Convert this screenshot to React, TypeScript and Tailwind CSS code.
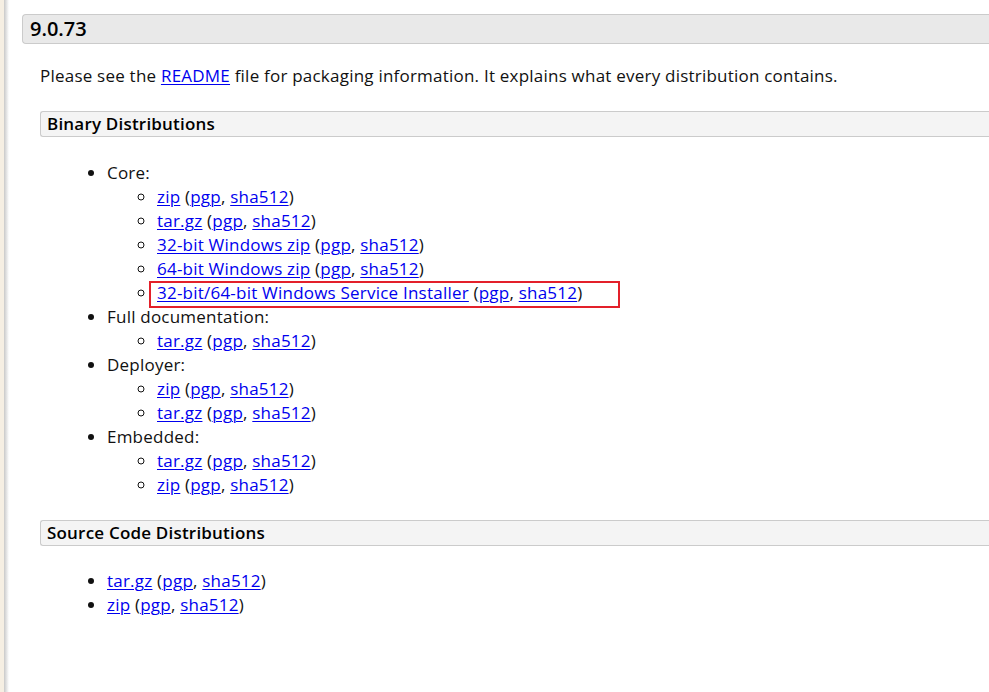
import React from "react";

type Item = { label: string; boxed?: boolean };

const A = ({ children }: { children: React.ReactNode }) => (
  <a href="#" className="text-[#0000ee] underline underline-offset-[2px] decoration-[1px]">
    {children}
  </a>
);

function Dl({ label, boxed }: Item) {
  return (
    <li className="relative">
      {boxed ? (
        <div className="absolute left-[-8px] top-0 h-[27px] w-[471px] border-2 border-[#e3202a]" />
      ) : null}
      <A>{label}</A> (<A>pgp</A>, <A>sha512</A>)
    </li>
  );
}

const binary: { title: string; items: Item[] }[] = [
  {
    title: "Core:",
    items: [
      { label: "zip" },
      { label: "tar.gz" },
      { label: "32-bit Windows zip" },
      { label: "64-bit Windows zip" },
      { label: "32-bit/64-bit Windows Service Installer", boxed: true },
    ],
  },
  { title: "Full documentation:", items: [{ label: "tar.gz" }] },
  { title: "Deployer:", items: [{ label: "zip" }, { label: "tar.gz" }] },
  { title: "Embedded:", items: [{ label: "tar.gz" }, { label: "zip" }] },
];

function SectionBar({ children }: { children: React.ReactNode }) {
  return (
    <div className="mr-[-20px] flex h-[26px] items-center rounded-l-[3px] border border-r-0 border-[#cbcbcb] bg-[#f4f4f4] pl-[6px] text-[17px] font-semibold tracking-[0.2px] text-black">
      {children}
    </div>
  );
}

export default function App() {
  return (
    <div
      className="flex h-[692px] w-[989px] overflow-hidden bg-white text-[17px] leading-[24px] tracking-[0.22px] text-[#111]"
      style={{ fontFamily: '"Open Sans", "Noto Sans", sans-serif' }}
    >
      <div className="w-[4px] shrink-0 bg-[#f6efe3]" />
      <div className="w-[5px] shrink-0 bg-gradient-to-r from-[#c9c9c9] to-white" />
      <div className="min-w-0 flex-1 pl-[13px] pt-[14px]">
        <div className="mr-[-20px] flex h-[30px] items-center rounded-l-[4px] border border-r-0 border-[#cbcbcb] bg-[#e9e9e9] pl-[7px] text-[20px] font-semibold tracking-normal text-black">
          9.0.73
        </div>
        <div className="pl-[18px]">
          <p className="mt-[20px]">
            Please see the <A>README</A> file for packaging information. It explains what every
            distribution contains.
          </p>
          <div className="mt-[23px]">
            <SectionBar>Binary Distributions</SectionBar>
          </div>
          <ul className="mt-[24px] list-disc pl-[67px]">
            {binary.map((g) => (
              <li key={g.title}>
                {g.title}
                <ul className="list-[circle] pl-[50px]">
                  {g.items.map((it, i) => (
                    <Dl key={i} {...it} />
                  ))}
                </ul>
              </li>
            ))}
          </ul>
          <div className="mt-[23px]">
            <SectionBar>Source Code Distributions</SectionBar>
          </div>
          <ul className="mt-[23px] list-disc pl-[67px]">
            <Dl label="tar.gz" />
            <Dl label="zip" />
          </ul>
        </div>
      </div>
    </div>
  );
}
